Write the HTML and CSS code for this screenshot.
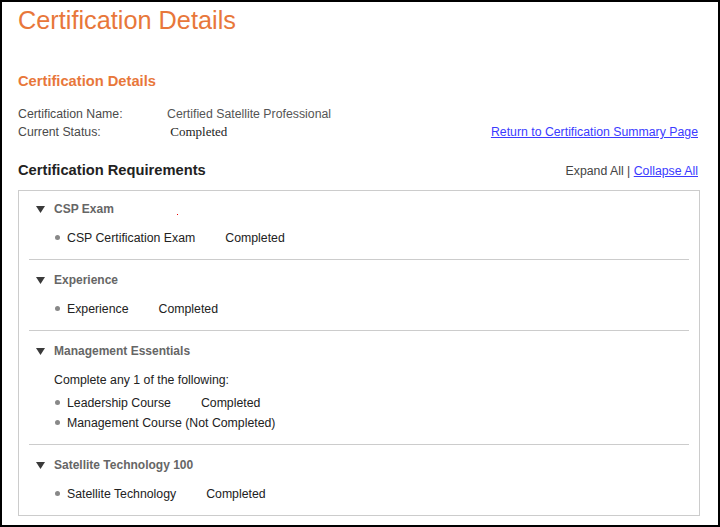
FILE: index.html
```html
<!DOCTYPE html>
<html>
  <head>
    <meta charset="utf-8" />
    <title>Certification Details</title>
    <link rel="stylesheet" href="styles.css">
  </head>
  <body>
    <div class="frame">
      <h1>Certification Details</h1>
      <h2>Certification Details</h2>

      <div class="info-row">
        <div class="info-label">Certification Name:</div>
        <div class="info-value">Certified Satellite Professional</div>
      </div>
      <div class="info-row">
        <div class="info-label">Current Status:</div>
        <div class="info-value status-serif">&nbsp;Completed</div>
        <a class="return-link" href="#">Return to Certification Summary Page</a>
      </div>

      <div class="req-header">
        <div class="req-title">Certification Requirements</div>
        <div class="req-tools">Expand All | <a href="#">Collapse All</a></div>
      </div>

      <div class="req-box">
        <div class="req-section">
          <div class="section-title">
            <svg class="caret" width="9" height="7" viewBox="0 0 9 7"><polygon points="0,0 9,0 4.5,7" /></svg>
            CSP Exam<span class="stray-dot"></span>
          </div>
          <ul class="items">
            <li>CSP Certification Exam<span class="item-status">Completed</span></li>
          </ul>
        </div>

        <div class="req-section">
          <div class="section-title">
            <svg class="caret" width="9" height="7" viewBox="0 0 9 7"><polygon points="0,0 9,0 4.5,7" /></svg>
            Experience
          </div>
          <ul class="items">
            <li>Experience<span class="item-status">Completed</span></li>
          </ul>
        </div>

        <div class="req-section">
          <div class="section-title">
            <svg class="caret" width="9" height="7" viewBox="0 0 9 7"><polygon points="0,0 9,0 4.5,7" /></svg>
            Management Essentials
          </div>
          <div class="section-note">Complete any 1 of the following:</div>
          <ul class="items after-note">
            <li>Leadership Course<span class="item-status">Completed</span></li>
            <li>Management Course (Not Completed)</li>
          </ul>
        </div>

        <div class="req-section">
          <div class="section-title">
            <svg class="caret" width="9" height="7" viewBox="0 0 9 7"><polygon points="0,0 9,0 4.5,7" /></svg>
            Satellite Technology 100
          </div>
          <ul class="items">
            <li>Satellite Technology<span class="item-status">Completed</span></li>
          </ul>
        </div>
      </div>
    </div>
  </body>
</html>
```

FILE: styles.css
```css
html, body {
    margin: 0;
    padding: 0;
    background: #fff;
}
body {
    font-family: "Liberation Sans", Arial, sans-serif;
    font-size: 12.3px;
    color: #444;
}
.frame {
    box-sizing: border-box;
    width: 720px;
    height: 527px;
    border: 2px solid #000;
    padding: 0 18px 0 16px;
    overflow: hidden;
}
h1 {
    margin: 3px 0 0;
    font-size: 25.3px;
    line-height: 30px;
    font-weight: normal;
    color: #e8773a;
}
h2 {
    margin: 37px 0 0;
    font-size: 14.7px;
    line-height: 18px;
    font-weight: bold;
    color: #e8773a;
}
.info-row {
    display: flex;
    align-items: baseline;
    height: 18px;
    line-height: 18px;
    padding-right: 2px;
}
h2 + .info-row {
    margin-top: 15px;
}
.info-label {
    width: 149px;
    color: #4a4a4a;
}
.info-value {
    color: #555;
}
.status-serif {
    font-family: "Liberation Serif", "Times New Roman", serif;
    font-size: 13px;
    color: #222;
}
.return-link {
    margin-left: auto;
    color: #3b3bff;
}
.req-header {
    display: flex;
    justify-content: space-between;
    align-items: baseline;
    margin-top: 20px;
    line-height: 18px;
    padding-right: 2px;
}
.req-title {
    font-size: 14.7px;
    font-weight: bold;
    color: #222;
}
.req-tools {
    color: #444;
}
.req-tools a {
    color: #3b3bff;
}
.req-box {
    margin-top: 10px;
    border: 1px solid #ccc;
    padding: 0 10px;
}
.req-section {
    padding: 12px 7px 11px;
    border-bottom: 1px solid #ccc;
}
.req-section:first-child {
    padding-top: 10px;
}
.req-section:last-child {
    border-bottom: none;
}
.section-title {
    display: flex;
    align-items: center;
    height: 16px;
    font-size: 12px;
    font-weight: bold;
    color: #666;
}
.caret {
    fill: #3a3a3a;
    margin-right: 9px;
}
.stray-dot {
    display: inline-block;
    width: 1px;
    height: 1px;
    background: #e00;
    margin: 10px 0 0 63px;
}
.section-note {
    margin: 11px 0 0 18px;
    line-height: 20px;
    color: #222;
}
.items {
    list-style: none;
    margin: 11px 0 0 18px;
    padding: 0;
}
.items.after-note {
    margin-top: 3px;
}
.items li {
    line-height: 20px;
    color: #222;
}
.items li::before {
    content: "";
    display: inline-block;
    width: 5px;
    height: 5px;
    border-radius: 50%;
    background: #888;
    margin: 0 7px 2px 1px;
    vertical-align: middle;
}
.item-status {
    margin-left: 30px;
}
```
